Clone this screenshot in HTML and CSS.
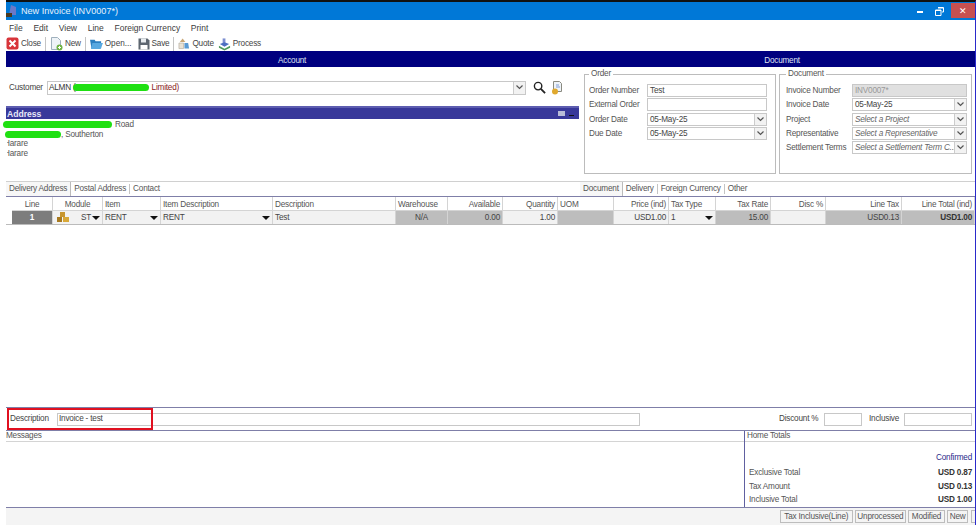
FILE: index.html
```html
<!DOCTYPE html>
<html lang="en">
<head>
<meta charset="utf-8">
<title>New Invoice</title>
<link rel="stylesheet" href="styles.css">
</head>
<body>
<div class="window">
  <header class="titlebar">
    <svg class="app-icon" width="12" height="14" viewBox="0 0 12 14"><path d="M3 11 L5 1 L10 3 L10 11Z" fill="#6a78c8"/><path d="M0 9h6v4H0z" fill="#4a3a20"/></svg>
    <span class="title-text">New Invoice (INV0007*)</span>
    <div class="win-buttons">
      <span class="win-min"></span>
      <svg class="win-restore" width="9" height="9" viewBox="0 0 9 9"><path d="M3 .5h5.500V5H7M.5 3H6v5.500H.5z" fill="none" stroke="#fff"/><path d="M3 1h5M1 3.500h5" stroke="#fff"/></svg>
      <span class="win-close">✕</span>
    </div>
  </header>
  <nav class="menubar">
    <span>File</span><span>Edit</span><span>View</span><span>Line</span><span>Foreign Currency</span><span>Print</span>
  </nav>
  <div class="toolbar">
    <span class="tool"><svg width="13" height="13" viewBox="0 0 13 13"><rect x=".5" y=".5" width="12" height="12" rx="2" fill="#d8343a"/><path d="M3.500 3.500l6 6M9.500 3.500l-6 6" stroke="#fff" stroke-width="2"/></svg>Close</span>
    <i class="tool-sep"></i>
    <span class="tool"><svg width="13" height="14" viewBox="0 0 13 14"><path d="M1.500.5h6l3 3v9h-9z" fill="#eef3f7" stroke="#9fb0bd"/><circle cx="9.500" cy="10.500" r="3" fill="#6fb244"/><path d="M8 10.500h3M9.500 9v3" stroke="#fff"/></svg>New</span>
    <i class="tool-sep"></i>
    <span class="tool tool-open"><svg width="13" height="12" viewBox="0 0 14 13"><path d="M0 2h5l1 1.500h6V11H1.500z" fill="#2c7fc0"/><path d="M2.500 5.500H14L11.500 12H1z" fill="#58a8e0"/></svg>Open...</span>
    <span class="tool"><svg width="12" height="12" viewBox="0 0 12 12"><path d="M.5.500h9l2 2v9H.5z" fill="#5d6670"/><rect x="3" y=".5" width="5" height="4" fill="#e8ecef"/><rect x="2.500" y="7" width="7" height="4.500" fill="#fff"/></svg>Save</span>
    <i class="tool-sep"></i>
    <span class="tool"><svg width="12" height="13" viewBox="0 0 13 13"><path d="M5 1l3 4H2z" fill="#c9a777"/><path d="M1 6h5v6H1z" fill="#e9e2d4" stroke="#a9a08f" stroke-width=".6"/><path d="M7 6h4l1 6H7z" fill="#5a9bd5"/></svg>Quote</span>
    <span class="tool"><svg width="13" height="14" viewBox="0 0 14 14"><path d="M5 1h3v5H5z" fill="#7d8fd0"/><path d="M2 7l5-2 5 2-5 3z" fill="#4d6fc0"/><path d="M1 9l6 3 6-3v2l-6 3-6-3z" fill="#4d9a5a"/></svg>Process</span>
  </div>
  <div class="section-bar"><span class="sec-account">Account</span><span class="sec-document">Document</span></div>

  <div class="upper">
    <section class="account">
      <div class="customer-row">
        <label class="cust-label">Customer</label>
        <div class="combo cust-combo"><span class="cust-val">ALMN (<b class="redact r-cust"></b><span class="dark-red">Limited)</span></span><span class="combo-btn"><svg class="chev" width="7" height="5" viewBox="0 0 7 5"><path d="M.5.500l3 3 3-3" fill="none" stroke="#555" stroke-width="1.200"/></svg></span></div>
        <svg class="search-ico" width="13" height="13" viewBox="0 0 14 14"><circle cx="5.500" cy="5.500" r="4" fill="none" stroke="#222" stroke-width="1.500"/><path d="M8.500 8.500l4.500 4.500" stroke="#222" stroke-width="2"/></svg>
        <svg class="doc-ico" width="12" height="14" viewBox="0 0 12 14"><path d="M2.500.5h6l2 2v8h-8z" fill="#eef3f8" stroke="#8a8a80"/><circle cx="4" cy="10.500" r="3" fill="#e0a92e"/><path d="M5 6h4M5 4h3" stroke="#68c" stroke-width=".8"/></svg>
      </div>
      <div class="address-head"><span>Address</span><span class="addr-tools"><i class="addr-sq"></i><i class="addr-min"></i></span></div>
      <div class="address-lines">
        <div class="addr-line"><b class="redact r-addr1"></b><span>Road</span></div>
        <div class="addr-line"><b class="redact r-addr2"></b><span>, Southerton</span></div>
        <div class="addr-line cut">Harare</div>
        <div class="addr-line cut">Harare</div>
      </div>
    </section>

    <fieldset class="group group-order">
      <legend>Order</legend>
      <div class="form-row"><label>Order Number</label><div class="field">Test</div></div>
      <div class="form-row"><label>External Order</label><div class="field"></div></div>
      <div class="form-row"><label>Order Date</label><div class="field has-btn">05-May-25<span class="combo-btn"><svg class="chev" width="7" height="5" viewBox="0 0 7 5"><path d="M.5.500l3 3 3-3" fill="none" stroke="#555" stroke-width="1.200"/></svg></span></div></div>
      <div class="form-row"><label>Due Date</label><div class="field has-btn">05-May-25<span class="combo-btn"><svg class="chev" width="7" height="5" viewBox="0 0 7 5"><path d="M.5.500l3 3 3-3" fill="none" stroke="#555" stroke-width="1.200"/></svg></span></div></div>
    </fieldset>

    <fieldset class="group group-doc">
      <legend>Document</legend>
      <div class="form-row"><label>Invoice Number</label><div class="field disabled">INV0007*</div></div>
      <div class="form-row"><label>Invoice Date</label><div class="field has-btn">05-May-25<span class="combo-btn"><svg class="chev" width="7" height="5" viewBox="0 0 7 5"><path d="M.5.500l3 3 3-3" fill="none" stroke="#555" stroke-width="1.200"/></svg></span></div></div>
      <div class="form-row"><label>Project</label><div class="field has-btn ph">Select a Project<span class="combo-btn"><svg class="chev" width="7" height="5" viewBox="0 0 7 5"><path d="M.5.500l3 3 3-3" fill="none" stroke="#555" stroke-width="1.200"/></svg></span></div></div>
      <div class="form-row"><label>Representative</label><div class="field has-btn ph">Select a Representative<span class="combo-btn"><svg class="chev" width="7" height="5" viewBox="0 0 7 5"><path d="M.5.500l3 3 3-3" fill="none" stroke="#555" stroke-width="1.200"/></svg></span></div></div>
      <div class="form-row"><label>Settlement Terms</label><div class="field has-btn ph">Select a Settlement Term C...<span class="combo-btn"><svg class="chev" width="7" height="5" viewBox="0 0 7 5"><path d="M.5.500l3 3 3-3" fill="none" stroke="#555" stroke-width="1.200"/></svg></span></div></div>
    </fieldset>
  </div>

  <div class="tabstrip">
    <div class="tabs tabs-left"><span class="tab active">Delivery Address</span><span class="tab">Postal Address</span><span class="tab">Contact</span></div>
    <div class="tabs tabs-right"><span class="tab active">Document</span><span class="tab">Delivery</span><span class="tab">Foreign Currency</span><span class="tab">Other</span></div>
  </div>

  <div class="grid-wrap">
    <div class="grid head">
      <span class="c ctr">Line</span><span class="c ctr">Module</span><span class="c">Item</span><span class="c">Item Description</span><span class="c">Description</span><span class="c">Warehouse</span><span class="c rt">Available</span><span class="c rt">Quantity</span><span class="c">UOM</span><span class="c rt">Price (ind)</span><span class="c">Tax Type</span><span class="c rt">Tax Rate</span><span class="c rt">Disc %</span><span class="c rt">Line Tax</span><span class="c rt">Line Total (ind)</span>
    </div>
    <div class="grid row">
      <span class="c ctr line-no">1</span>
      <span class="c module"><svg width="12" height="11" viewBox="0 0 12 11"><rect x="3" y="0" width="5" height="5" fill="#c8962e"/><rect x="0" y="5" width="5" height="5" fill="#a87a20"/><rect x="6" y="5" width="6" height="5" fill="#d8a838"/></svg><span>ST</span><i class="arrow"></i></span>
      <span class="c drop">RENT<i class="arrow"></i></span>
      <span class="c drop">RENT<i class="arrow"></i></span>
      <span class="c">Test</span>
      <span class="c ctr grey">N/A</span>
      <span class="c rt grey">0.00</span>
      <span class="c rt">1.00</span>
      <span class="c grey"></span>
      <span class="c rt">USD1.00</span>
      <span class="c drop">1<i class="arrow"></i></span>
      <span class="c rt grey">15.00</span>
      <span class="c"></span>
      <span class="c rt grey">USD0.13</span>
      <span class="c rt grey strong">USD1.00</span>
    </div>
  </div>

  <div class="desc-bar">
    <label class="desc-label">Description</label>
    <div class="field desc-field">Invoice - test</div>
    <label class="disc-label">Discount %</label>
    <div class="field disc-field"></div>
    <label class="incl-label">Inclusive</label>
    <div class="field incl-field"></div>
    <div class="red-box"></div>
  </div>

  <div class="bottom">
    <div class="messages"><div class="panel-head">Messages</div></div>
    <div class="totals">
      <div class="panel-head">Home Totals</div>
      <div class="confirmed">Confirmed</div>
      <div class="total-row"><span>Exclusive Total</span><b>USD 0.87</b></div>
      <div class="total-row"><span>Tax Amount</span><b>USD 0.13</b></div>
      <div class="total-row"><span>Inclusive Total</span><b>USD 1.00</b></div>
    </div>
  </div>

  <footer class="statusbar">
    <span class="stat stat-tax">Tax Inclusive(Line)</span><span class="stat stat-proc">Unprocessed</span><span class="stat stat-mod">Modified</span><span class="stat stat-new">New</span><span class="stat grip"></span>
  </footer>
</div>
</body>
</html>
```
FILE: styles.css
```css
* { box-sizing: border-box; }
html, body { margin: 0; padding: 0; background: #fff; }
body { width: 979px; height: 525px; overflow: hidden; font-family: "Liberation Sans", sans-serif; font-size: 8.2px; letter-spacing: -.2px; color: #444; }
.window { width: 970px; height: 525px; margin-left: 6px; border-top: 2px solid #111; border-right: 1px solid #2a2acb; display: flex; flex-direction: column; }

.titlebar { height: 18px; flex: none; background: #0078d7; color: #e8f2fb; display: flex; align-items: center; font-size: 9.1px; letter-spacing: 0; }
.app-icon { margin-right: 3px; }
.title-text { flex: 1; }
.win-buttons { display: flex; align-items: center; height: 16px; }
.win-min { width: 6px; height: 2px; background: #fff; margin-right: 12px; margin-top: 2px; }
.win-restore { margin-right: 7px; }
.win-close { width: 24px; height: 15px; background: #c75050; color: #fff; font-size: 9px; display: flex; align-items: center; justify-content: center; align-self: flex-start; }

.menubar { height: 16px; flex: none; display: flex; align-items: center; gap: 10.7px; padding-left: 3px; font-size: 8.5px; letter-spacing: 0; color: #3c3c3c; }
.toolbar { height: 15px; flex: none; display: flex; align-items: center; color: #444; }
.tool { display: inline-flex; align-items: center; gap: 2px; margin-right: 4px; }
.tool-open { letter-spacing: 0; margin-right: 6px; }
.tool-sep { width: 1px; height: 14px; background: #c4c4c4; margin-right: 4px; }

.section-bar { height: 16px; flex: none; background: #00007f; color: #dfe3f2; display: flex; align-items: center; padding-top: 2px; }
.sec-account { margin-left: 272px; }
.sec-document { margin-left: 458px; }

.upper { height: 114px; flex: none; display: flex; align-items: flex-start; }
.account { width: 573px; flex: none; }
.customer-row { height: 15px; margin-top: 13px; display: flex; align-items: center; }
.cust-label { width: 41px; padding-left: 3px; flex: none; }
.combo { height: 14px; border: 1px solid #c8c8c8; background: #fff; display: flex; align-items: center; position: relative; }
.cust-combo { width: 479px; flex: none; padding-left: 1px; }
.cust-val { flex: 1; color: #333; white-space: nowrap; display: flex; align-items: center; }
.dark-red { color: #8a1c1c; }
.redact { display: inline-block; background: #1fe012; border-radius: 4px; }
.r-cust { width: 76px; height: 7px; margin: 0 3px 0 -3px; }
.combo-btn { position: absolute; right: 0; top: 0; bottom: 0; width: 12px; background: #f2f2f2; border-left: 1px solid #ccc; display: flex; align-items: center; justify-content: center; }
.search-ico { margin-left: 7px; }
.doc-ico { margin-left: 5px; }

.address-head { height: 13px; margin-top: 11px; background: #38389a; border-top: 2px solid #5d5db0; color: #e8e8f8; font-weight: bold; font-size: 8.6px; letter-spacing: 0; display: flex; align-items: center; justify-content: space-between; padding-left: 1px; }
.addr-tools { display: flex; align-items: center; gap: 4px; padding-right: 5px; }
.addr-sq { width: 7px; height: 5px; background: #b8bcd8; }
.addr-min { width: 5px; height: 1px; background: #111; margin-top: 3px; }
.address-lines { margin: 1px 0 0 -3px; color: #555; }
.addr-line { height: 9.5px; line-height: 9.5px; white-space: nowrap; display: flex; align-items: center; }
.r-addr1 { width: 109px; height: 7px; margin-right: 3px; }
.r-addr2 { width: 56px; height: 7px; margin-left: 2px; }
.cut { clip-path: inset(0 0 0 3px); margin-left: 1px; }

.group { flex: none; margin: 3px 0 0; height: 104px; border: 1px solid #bcbcbc; padding: 5.5px 0 0 4px; }
.group legend { padding: 0 2px; color: #555; line-height: 8px; }
.group-order { margin-left: 5px; width: 192px; }
.group-doc { margin-left: 3px; width: 193px; padding-left: 6px; }
.form-row { display: flex; align-items: center; height: 14.3px; }
.form-row label { flex: none; color: #555; white-space: nowrap; }
.group-order label { width: 58px; }
.group-doc label { width: 66px; }
.field { height: 13px; border: 1px solid #c8c8c8; background: #fff; color: #444; padding-left: 1px; line-height: 11px; position: relative; white-space: nowrap; overflow: hidden; }
.group .field { padding-left: 2px; }
.group-order .field { width: 120px; }
.group-doc .field { width: 115px; }
.disabled { background: #e0e0e0; color: #999; }
.ph { font-style: italic; color: #666; }

.tabstrip { height: 15px; flex: none; border-top: 1px solid #d0d0d0; display: flex; }
.tabs { display: flex; height: 14px; align-items: center; }
.tabs-left { width: 573px; }
.tabs-right { flex: 1; margin-left: 1px; }
.tab { padding: 0 3px; border-right: 1px solid #c4c4c4; height: 10px; line-height: 10px; color: #555; white-space: nowrap; }
.tab:last-child { border-right: 0; }
.tab.active { background: #f7f7f7; height: 14px; line-height: 14px; border-right: 1px solid #bbb; padding: 0 3px; }

.grid-wrap { flex: none; height: 211px; border-top: 1px solid #7f7fa8; }
.grid { display: grid; grid-template-columns: 41px 50px 58px 112px 123px 52px 55px 55px 56px 55px 47px 55px 55px 76px 73px; padding-left: 6px; }
.grid.head { height: 14px; background: #fff; }
.grid.row { height: 14px; border-bottom: 1px solid #bbb; }
.grid .c { border-right: 1px solid #d4d4d4; border-bottom: 1px solid #d4d4d4; padding: 0 2px; line-height: 13px; color: #555; white-space: nowrap; overflow: hidden; min-width: 0; }
.head .c { line-height: 15px; }
.ctr { text-align: center; }
.rt { text-align: right; }
.row .c { background: #f2f2f2; color: #444; position: relative; border-bottom: 0; }
.row .grey { background: #bdbdbd; }
.row .line-no { background: #7d7d7d; color: #fff; font-weight: bold; }
.row .strong { font-weight: bold; color: #333; }
.row .module { display: flex; align-items: center; gap: 12px; padding-left: 4px; }
.row .drop { display: block; }
.arrow { position: absolute; right: 2px; top: 5px; width: 0; height: 0; border-left: 4px solid transparent; border-right: 4px solid transparent; border-top: 4px solid #111; }

.desc-bar { height: 23px; flex: none; border-top: 1px solid #7f7fa8; display: flex; align-items: center; position: relative; }
.desc-bar label { padding-bottom: 2px; }
.desc-label { width: 51px; padding-left: 4px; flex: none; }
.desc-field { width: 583px; flex: none; line-height: 10px; }
.disc-label { margin-left: 139px; width: 45px; flex: none; }
.disc-field { width: 38px; flex: none; }
.incl-label { margin-left: 7px; width: 35px; flex: none; }
.incl-field { width: 68px; flex: none; }
.red-box { position: absolute; left: 1px; top: 0; width: 146px; height: 22px; border: 2px solid #e01020; }

.bottom { height: 78px; flex: none; border-top: 1px solid #7f7fa8; border-bottom: 1px solid #7f7fa8; display: flex; }
.messages { width: 739px; flex: none; border-right: 1px solid #6060a0; }
.panel-head { height: 11px; line-height: 9px; border-bottom: 1px solid #d4d4d4; color: #555; }
.totals { flex: 1; }
.totals .panel-head { padding-left: 2px; }
.confirmed { text-align: right; color: #2b2b8a; margin-top: 10px; height: 14px; line-height: 12px; padding-right: 3px; }
.total-row { display: flex; justify-content: space-between; height: 13.5px; line-height: 13.5px; padding: 0 3px 0 4px; color: #555; }
.total-row b { color: #333; }

.statusbar { flex: 1; background: #f4f4f4; display: flex; justify-content: flex-end; padding-top: 2px; min-height: 0; }
.stat { border: 1px solid #bdbdbd; height: 13px; line-height: 12px; color: #555; margin-left: 2px; white-space: nowrap; }
.stat-tax { padding: 0 3.5px; }
.stat-proc { padding: 0 1.5px; }
.stat-mod { padding: 0 3px; }
.stat-new { padding: 0 1.5px; }
.grip { width: 4px; border-right: 0; margin-left: 3px; }
```
